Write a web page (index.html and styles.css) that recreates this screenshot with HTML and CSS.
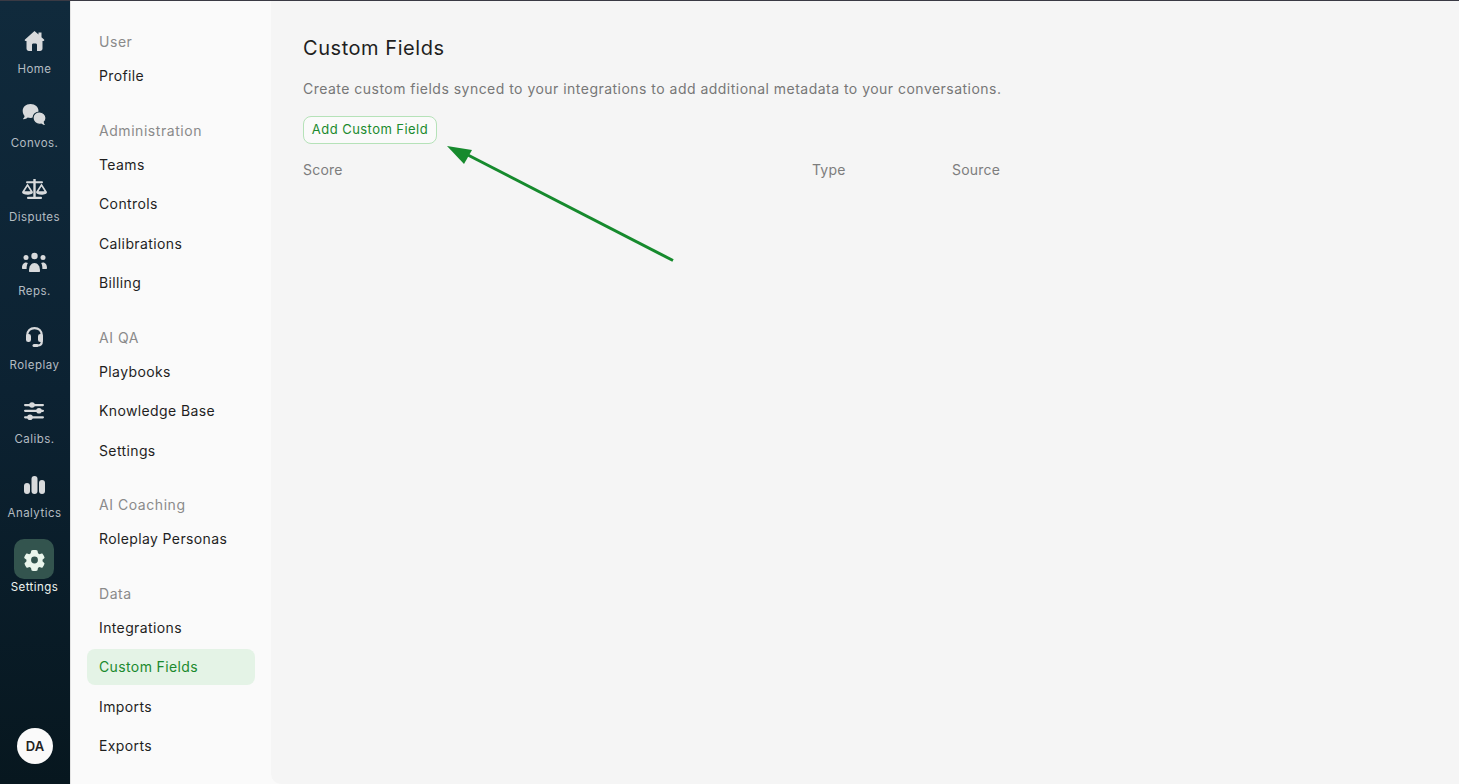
FILE: index.html
```html
<!DOCTYPE html>
<html lang="en">
<head>
<meta charset="utf-8">
<title>Custom Fields</title>
<link rel="stylesheet" href="styles.css">
</head>
<body>
<div class="app">
  <nav class="rail">
    <a class="rail-item"><span class="rail-icon"><svg viewBox="0 0 28 28" class="ico"><path d="M14.500 4 18.500 7.500V5.500h3v4.700L24 12.500c.6.6.2 1.500-.6 1.500h-.9v7.500c0 1.400-1 2.500-2.500 2.500h-3v-6c0-.8-.6-1.400-1.400-1.400h-2.200c-.8 0-1.400.6-1.400 1.400v6H9c-1.500 0-2.500-1.100-2.500-2.500V14h-.9c-.8 0-1.200-.9-.6-1.500z"/></svg></span><span class="rail-label">Home</span></a>
    <a class="rail-item"><span class="rail-icon"><svg viewBox="0 0 28 28" class="ico"><path d="M10.500 3c4.700 0 8 3 8 7s-3.300 7-8 7c-1 0-2-.1-2.800-.4C6.500 17.600 5 18.300 3.400 18.200c-.4 0-.5-.4-.2-.6.8-.7 1.300-1.600 1.400-2.600C3.500 13.800 2.700 12 2.700 10c0-4 3.100-7 7.800-7z"/><path class="ico-gap" d="M19.500 11c3.700 0 6.500 2.600 6.500 6 0 1.600-.6 3-1.700 4 .1 1 .6 2 1.400 2.900.3.300.1.700-.3.700-1.700.1-3.100-.6-4.200-1.500-.5.100-1.100.2-1.700.2-3.600 0-6.500-2.700-6.500-6.300s2.900-6 6.500-6z"/></svg></span><span class="rail-label">Convos.</span></a>
    <a class="rail-item"><span class="rail-icon"><svg viewBox="0 0 28 28" class="ico"><rect x="13.300" y="4" width="2.400" height="18"/><rect x="6" y="6.200" width="17" height="2.100" rx="1"/><rect x="7" y="21.800" width="15" height="2.200" rx="1"/><path fill-rule="evenodd" d="M7.500 8.500 13 17c0 1.700-2.500 2.800-5.500 2.800S2 18.700 2 17zM7.500 11.500 4.500 16.300h6z"/><path fill-rule="evenodd" d="M21.500 8.500 27 17c0 1.700-2.500 2.800-5.500 2.800S16 18.700 16 17zM21.500 11.500 18.500 16.300h6z"/></svg></span><span class="rail-label">Disputes</span></a>
    <a class="rail-item"><span class="rail-icon"><svg viewBox="0 0 28 28" class="ico"><circle cx="14.500" cy="7" r="3.200"/><circle cx="6" cy="8.500" r="2.500"/><circle cx="23" cy="8.500" r="2.500"/><path d="M9 22c0-5 2.200-8 5.500-8s5.500 3 5.500 8c0 .6-.4 1-1 1H10c-.6 0-1-.4-1-1z"/><path d="M2 19c0-3 1.600-5.400 4-5.400.7 0 1.400.2 1.900.5-.9 1.400-1.300 3-1.300 5.900H3c-.6 0-1-.4-1-1z"/><path d="M27 19c0-3-1.600-5.400-4-5.400-.7 0-1.400.2-1.900.5.9 1.400 1.300 3 1.300 5.900H26c.6 0 1-.4 1-1z"/></svg></span><span class="rail-label">Reps.</span></a>
    <a class="rail-item"><span class="rail-icon"><svg viewBox="0 0 28 28" class="ico"><path class="ico-line" d="M7.200 14V12.500C7.200 7.800 10.300 5.100 14.500 5.100S21.800 7.800 21.800 12.500V18.500c0 2.500-1.800 4-4 4H15"/><rect x="6" y="11" width="5" height="8" rx="2.300"/><rect x="18" y="11" width="5" height="8" rx="2.300"/><rect x="12.500" y="21" width="6" height="3" rx="1.500"/></svg></span><span class="rail-label">Roleplay</span></a>
    <a class="rail-item"><span class="rail-icon"><svg viewBox="0 0 28 28" class="ico"><rect x="4" y="7" width="20" height="2.200" rx="1.100"/><rect x="4" y="12.700" width="20" height="2.200" rx="1.100"/><rect x="4" y="19.200" width="20" height="2.200" rx="1.100"/><circle cx="12" cy="8" r="2.800"/><circle cx="19" cy="13.700" r="2.800"/><circle cx="10" cy="20.300" r="2.800"/></svg></span><span class="rail-label">Calibs.</span></a>
    <a class="rail-item"><span class="rail-icon"><svg viewBox="0 0 28 28" class="ico"><rect x="4" y="12" width="6" height="11" rx="3"/><rect x="11.500" y="5" width="6" height="18" rx="3"/><rect x="19" y="9" width="6" height="14" rx="3"/></svg></span><span class="rail-label">Analytics</span></a>
    <a class="rail-item rail-item-active"><span class="rail-icon"><svg viewBox="0 0 28 28" class="ico"><path transform="translate(3.700 4.200) scale(.9)" fill-rule="evenodd" d="M14.600 1.200c.4.100.7.400.8.800l.5 2.500c.6.300 1.100.6 1.600 1l2.400-.8c.4-.1.800 0 1 .3 1 1.200 1.700 2.500 2.200 4 .1.400 0 .8-.3 1l-1.900 1.700c.1.600.1 1.200 0 1.800l1.900 1.700c.3.300.4.700.3 1-.5 1.500-1.200 2.800-2.200 4-.2.300-.6.400-1 .3l-2.400-.8c-.5.400-1 .7-1.600 1l-.5 2.500c-.1.400-.4.700-.8.800-1.700.3-3.500.3-5.200 0-.4-.1-.7-.4-.8-.8l-.5-2.500c-.6-.3-1.100-.6-1.600-1l-2.400.8c-.4.100-.8 0-1-.3-1-1.200-1.700-2.500-2.200-4-.1-.3 0-.7.300-1l1.900-1.700c-.1-.6-.1-1.200 0-1.800L.9 10c-.3-.2-.4-.6-.3-1 .5-1.500 1.200-2.800 2.200-4 .2-.3.600-.4 1-.3l2.400.8c.5-.4 1-.7 1.600-1L8.300 2c.1-.4.400-.7.800-.8 1.700-.3 3.800-.3 5.500 0zM12 8.200a3.800 3.800 0 1 0 0 7.600 3.800 3.800 0 0 0 0-7.600z"/></svg></span><span class="rail-label">Settings</span></a>
    <div class="rail-spacer"></div>
    <div class="avatar">DA</div>
  </nav>

  <aside class="subnav">
    <section class="subnav-group">
      <h4 class="subnav-title">User</h4>
      <a class="subnav-link">Profile</a>
    </section>
    <section class="subnav-group">
      <h4 class="subnav-title">Administration</h4>
      <a class="subnav-link">Teams</a>
      <a class="subnav-link">Controls</a>
      <a class="subnav-link">Calibrations</a>
      <a class="subnav-link">Billing</a>
    </section>
    <section class="subnav-group">
      <h4 class="subnav-title">AI QA</h4>
      <a class="subnav-link">Playbooks</a>
      <a class="subnav-link">Knowledge Base</a>
      <a class="subnav-link">Settings</a>
    </section>
    <section class="subnav-group">
      <h4 class="subnav-title">AI Coaching</h4>
      <a class="subnav-link">Roleplay Personas</a>
    </section>
    <section class="subnav-group">
      <h4 class="subnav-title">Data</h4>
      <a class="subnav-link">Integrations</a>
      <a class="subnav-link subnav-link-active">Custom Fields</a>
      <a class="subnav-link">Imports</a>
      <a class="subnav-link">Exports</a>
    </section>
  </aside>

  <main class="content">
    <h1 class="page-title">Custom Fields</h1>
    <p class="page-desc">Create custom fields synced to your integrations to add additional metadata to your conversations.</p>
    <button class="add-btn">Add Custom Field</button>
    <div class="table-head">
      <span>Score</span>
      <span>Type</span>
      <span>Source</span>
    </div>
    <svg class="arrow" width="240" height="130" viewBox="0 0 240 130"><line x1="232" y1="119.500" x2="24" y2="12.500" stroke="#168a2d" stroke-width="3"/><polygon points="6,5 31,9 23,23" fill="#168a2d"/></svg>
  </main>
</div>
</body>
</html>
```
FILE: styles.css
```css
* { box-sizing: border-box; }
html, body { height: 100%; }
body {
  margin: 0;
  overflow: hidden;
  background: #fafafa;
  font-family: "Inter", "Noto Sans", sans-serif;
  color: #1f1f1f;
}
.app {
  display: flex;
  height: 784px;
  border-top: 1px solid #3a3a44;
}
.rail {
  width: 70px;
  flex: none;
  display: flex;
  flex-direction: column;
  align-items: center;
  padding: 20px 2px 0 0;
  background: linear-gradient(180deg, #102a3c 0%, #0c2232 50%, #07171f 100%);
}
.rail-item {
  width: 68px;
  height: 74px;
  display: flex;
  flex-direction: column;
  align-items: center;
}
.rail-icon {
  width: 40px;
  height: 40px;
  display: flex;
  align-items: center;
  justify-content: center;
  border-radius: 10px;
}
.ico { width: 28px; height: 28px; fill: #d8dadc; }
.ico-gap { stroke: #0f2838; stroke-width: 1.200; }
.ico-line { fill: none; stroke: #d8dadc; stroke-width: 2.200; }
.rail-label {
  padding-left: 1px;
  font-size: 11.500px;
  line-height: 16px;
  letter-spacing: .45px;
  color: #b4bcc2;
  white-space: nowrap;
}
.rail-item-active .rail-icon { background: #33544e; }
.rail-item-active .ico { fill: #eaf5ec; }
.rail-item-active .rail-label { color: #eef3ef; }
.rail-spacer { flex: 1; }
.avatar {
  width: 36px;
  height: 36px;
  margin: 0 0 20px 2px;
  border-radius: 50%;
  background: #fafafa;
  color: #222;
  font-size: 13px;
  font-weight: 600;
  display: flex;
  align-items: center;
  justify-content: center;
}
.subnav {
  width: 201px;
  flex: none;
  padding: 29px 16px 0;
  background: #fafafa;
  border-left: 1px solid #e4e4e4;
  display: flex;
  flex-direction: column;
  gap: 24.600px;
}
.subnav-group { display: flex; flex-direction: column; gap: 3.500px; }
.subnav-title {
  margin: 0 0 .5px;
  padding-left: 12px;
  height: 24px;
  font-size: 14px;
  font-weight: 400;
  line-height: 24px;
  letter-spacing: .55px;
  color: #8a8a8a;
}
.subnav-link {
  height: 36px;
  padding-left: 12px;
  border-radius: 8px;
  font-size: 14px;
  line-height: 36.400px;
  letter-spacing: .38px;
  color: #1f1f1f;
  white-space: nowrap;
}
.subnav-link-active { background: #e4f3e6; color: #1b8a2e; }
.content {
  position: relative;
  flex: 1;
  padding: 33px 32px 0;
  background: #f5f5f5;
  border-bottom-left-radius: 10px;
}
.page-title {
  margin: 0;
  font-size: 20px;
  font-weight: 400;
  line-height: 28px;
  letter-spacing: .55px;
  color: #1f1f1f;
}
.page-desc {
  margin: 13px 0 0;
  font-size: 14px;
  line-height: 28px;
  letter-spacing: .475px;
  color: #777;
}
.add-btn {
  display: block;
  margin-top: 13px;
  width: 134px;
  height: 28px;
  padding: 0 0 2px;
  border: 1.500px solid #b5e2b8;
  border-radius: 8px;
  background: #fafafa;
  font-family: inherit;
  font-size: 13px;
  letter-spacing: .45px;
  color: #1b8a2e;
}
.table-head {
  display: grid;
  grid-template-columns: 509px 140px 1fr;
  margin-top: 15px;
  font-size: 14px;
  line-height: 22px;
  letter-spacing: .2px;
  color: #7d7d7d;
}
.arrow {
  position: absolute;
  left: 170px;
  top: 140px;
}
```
